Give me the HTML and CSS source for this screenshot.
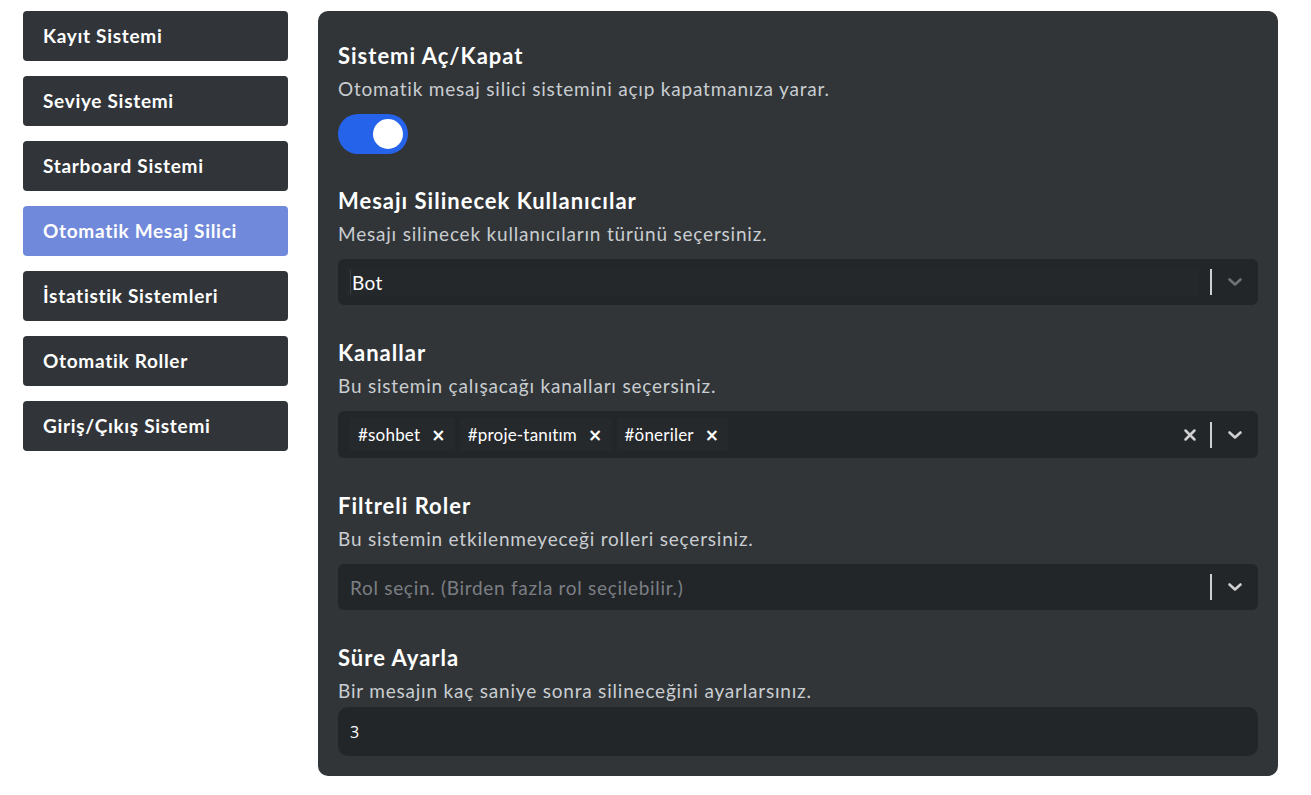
FILE: index.html
```html
<!DOCTYPE html>
<html lang="tr">
<head>
    <meta charset="UTF-8">
    <meta name="viewport" content="width=device-width, initial-scale=1.0">
    <title>Otomatik Mesaj Silici</title>
    <link rel="stylesheet" href="styles.css">
</head>
<body>
    <div class="page">
        <nav class="sidebar">
            <a href="#" class="side-button">Kayıt Sistemi</a>
            <a href="#" class="side-button">Seviye Sistemi</a>
            <a href="#" class="side-button">Starboard Sistemi</a>
            <a href="#" class="side-button active">Otomatik Mesaj Silici</a>
            <a href="#" class="side-button">İstatistik Sistemleri</a>
            <a href="#" class="side-button">Otomatik Roller</a>
            <a href="#" class="side-button">Giriş/Çıkış Sistemi</a>
        </nav>

        <main class="panel">
            <section class="setting first">
                <h2>Sistemi Aç/Kapat</h2>
                <p class="desc">Otomatik mesaj silici sistemini açıp kapatmanıza yarar.</p>
                <label class="toggle">
                    <span class="knob"></span>
                </label>
            </section>

            <section class="setting">
                <h2>Mesajı Silinecek Kullanıcılar</h2>
                <p class="desc">Mesajı silinecek kullanıcıların türünü seçersiniz.</p>
                <div class="select">
                    <div class="value-box"><span class="caret"></span>Bot</div>
                    <div class="indicators">
                        <span class="sep"></span>
                        <svg class="chevron dim" viewBox="0 0 20 20"><path d="M4.5 7.5 10 12.5 15.5 7.5" /></svg>
                    </div>
                </div>
            </section>

            <section class="setting">
                <h2>Kanallar</h2>
                <p class="desc">Bu sistemin çalışacağı kanalları seçersiniz.</p>
                <div class="select multi">
                    <div class="tags">
                        <span class="tag">#sohbet <span class="tag-x">×</span></span>
                        <span class="tag">#proje-tanıtım <span class="tag-x">×</span></span>
                        <span class="tag">#öneriler <span class="tag-x">×</span></span>
                    </div>
                    <div class="indicators">
                        <svg class="clear" viewBox="0 0 20 20"><path d="M5 5 15 15M15 5 5 15" /></svg>
                        <span class="sep"></span>
                        <svg class="chevron" viewBox="0 0 20 20"><path d="M4.5 7.5 10 12.5 15.5 7.5" /></svg>
                    </div>
                </div>
            </section>

            <section class="setting">
                <h2>Filtreli Roler</h2>
                <p class="desc">Bu sistemin etkilenmeyeceği rolleri seçersiniz.</p>
                <div class="select">
                    <div class="placeholder">Rol seçin. (Birden fazla rol seçilebilir.)</div>
                    <div class="indicators">
                        <span class="sep"></span>
                        <svg class="chevron" viewBox="0 0 20 20"><path d="M4.5 7.5 10 12.5 15.5 7.5" /></svg>
                    </div>
                </div>
            </section>

            <section class="setting last">
                <h2>Süre Ayarla</h2>
                <p class="desc">Bir mesajın kaç saniye sonra silineceğini ayarlarsınız.</p>
                <input class="number" type="text" value="3">
            </section>
        </main>
    </div>
</body>
</html>
```

FILE: styles.css
```css
body {
    margin: 0;
    background-color: #fff;
    font-family: Lato, "Open Sans", sans-serif;
}
.page {
    display: flex;
    align-items: flex-start;
    gap: 30px;
    padding: 11px 23px;
}
.sidebar {
    display: flex;
    flex-direction: column;
    gap: 15px;
    width: 265px;
}
.side-button {
    display: flex;
    align-items: center;
    height: 50px;
    padding: 0 20px 1px;
    box-sizing: border-box;
    background-color: #313539;
    border-radius: 4px;
    color: #fff;
    font-size: 19px;
    font-weight: 700;
    letter-spacing: 0.7px;
    text-decoration: none;
}
.side-button.active {
    background-color: #7189da;
}
.panel {
    width: 960px;
    box-sizing: border-box;
    padding: 32px 20px 20px;
    background-color: #313538;
    border-radius: 10px;
}
.setting {
    margin-bottom: 35px;
}
.setting.first {
    margin-bottom: 34px;
}
.setting.last {
    margin-bottom: 0;
}
.setting h2 {
    margin: 0;
    font-size: 22px;
    line-height: 26px;
    font-weight: 700;
    letter-spacing: 1px;
    color: #fff;
}
.desc {
    margin: 8px 0 13px;
    font-size: 19px;
    line-height: 24px;
    color: #c9cdd1;
    letter-spacing: 0.8px;
}
.last .desc {
    margin-bottom: 4px;
}
.toggle {
    display: flex;
    align-items: center;
    justify-content: flex-end;
    width: 70px;
    height: 40px;
    padding: 0 5px;
    box-sizing: border-box;
    border-radius: 20px;
    background-color: #2563eb;
    margin-top: 12px;
}
.knob {
    width: 30px;
    height: 30px;
    border-radius: 50%;
    background-color: #fff;
}
.select {
    display: flex;
    align-items: center;
    height: 46px;
    padding: 0 13px 0 8px;
    background-color: #232629;
    border-radius: 6px;
}
.select.multi {
    height: 47px;
}
.value-box {
    flex: 1;
    display: flex;
    align-items: center;
    height: 30px;
    margin-right: 8px;
    padding-left: 4px;
    background-color: #25282b;
    color: #fff;
    font-size: 19px;
    letter-spacing: 0.4px;
}
.caret {
    width: 1px;
    height: 24px;
    background-color: #3c3f42;
    margin-right: 1px;
}
.placeholder {
    flex: 1;
    padding-left: 4px;
    font-size: 19px;
    letter-spacing: 0.7px;
    color: #7b7f84;
}
.tags {
    flex: 1;
    display: flex;
    gap: 5px;
    padding-left: 4px;
}
.tag {
    display: flex;
    align-items: center;
    height: 33px;
    padding: 0 9px 0 8px;
    background-color: #26292c;
    color: #fff;
    font-size: 17px;
    letter-spacing: 0.2px;
}
.tag-x {
    margin-left: 11px;
    font-family: "DejaVu Sans", sans-serif;
    font-weight: 700;
    font-size: 17px;
}
.indicators {
    display: flex;
    align-items: center;
    gap: 8px;
}
.sep {
    width: 2px;
    height: 26px;
    background-color: #d0d0d0;
    margin: 0 5px 0 3px;
}
.chevron,
.clear {
    width: 20px;
    height: 20px;
    fill: none;
    stroke: #d0d0d0;
    stroke-width: 2.6;
    stroke-linecap: round;
    stroke-linejoin: round;
}
.chevron.dim {
    stroke: #6e7276;
}
.clear {
    width: 18px;
    height: 18px;
    stroke-width: 2.8;
}
.number {
    display: block;
    width: 100%;
    height: 49px;
    box-sizing: border-box;
    padding: 0 12px;
    border: none;
    border-radius: 10px;
    background-color: #232629;
    color: #fff;
    font-family: "Open Sans", sans-serif;
    font-size: 16px;
    outline: none;
}
```
